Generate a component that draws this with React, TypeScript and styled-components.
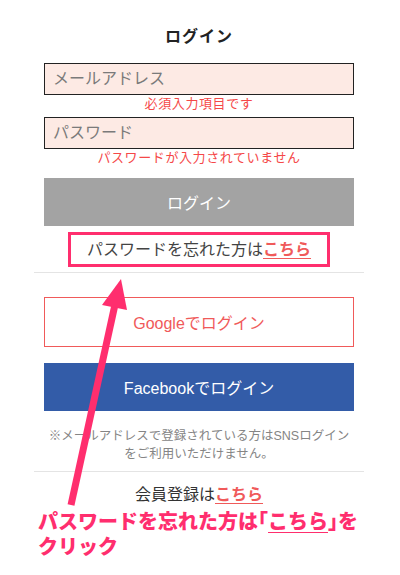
import React from "react";
import styled, { createGlobalStyle } from "styled-components";

const GlobalStyle = createGlobalStyle`
	html, body {
		margin: 0;
		padding: 0;
		background: #ffffff;
	}
	body {
		font-family: "Liberation Sans", "Noto Sans CJK JP", sans-serif;
		color: #333333;
	}
`;

const PINK = "#ff2e6e";
const LINK = "#f05a5a";

const Page = styled.div`
	position: relative;
	width: 400px;
	height: 575px;
	overflow: hidden;
`;

const Container = styled.main`
	width: 330px;
	margin-left: 34px;
	padding-top: 25px;
	display: flex;
	flex-direction: column;
`;

const Title = styled.h1`
	margin: 0;
	font-size: 16px;
	line-height: 24px;
	font-weight: 700;
	letter-spacing: 1px;
	text-align: center;
	color: #222222;
`;

const Form = styled.form`
	display: flex;
	flex-direction: column;
	padding: 0 10px;
	margin-top: 14px;
`;

const Input = styled.input`
	box-sizing: border-box;
	width: 100%;
	height: 32px;
	margin: 0;
	padding: 0 8px;
	border: 1px solid #222222;
	border-radius: 0;
	background: #fdeae4;
	font-family: "Liberation Sans", "Noto Sans CJK JP", sans-serif;
	font-size: 16px;
	outline: none;

	&::placeholder {
		color: #7a7a7a;
	}
`;

const ErrorText = styled.p<{ $gap: number }>`
	margin: 0 0 ${(p) => p.$gap}px;
	font-size: 13px;
	line-height: 18px;
	text-align: center;
	color: #f54848;
	letter-spacing: 0.6px;
`;

const Button = styled.button<{ $variant: "gray" | "google" | "facebook" }>`
	box-sizing: border-box;
	width: 100%;
	margin: 0;
	height: ${(p) => (p.$variant === "google" ? 50 : 48)}px;
	border: ${(p) => (p.$variant === "google" ? `1px solid ${LINK}` : "none")};
	border-radius: 0;
	background: ${(p) =>
		p.$variant === "gray" ? "#a3a3a3" : p.$variant === "google" ? "#ffffff" : "#335ca8"};
	color: ${(p) => (p.$variant === "google" ? LINK : "#ffffff")};
	font-family: "Liberation Sans", "Noto Sans CJK JP", sans-serif;
	font-size: 16px;
	cursor: pointer;
`;

const Row = styled.div<{ $top: number }>`
	display: flex;
	justify-content: center;
	margin-top: ${(p) => p.$top}px;
`;

const Highlight = styled.p`
	margin: 0;
	padding: 0 16px;
	border: 3px solid ${PINK};
	font-size: 16px;
	line-height: 29px;
	color: #444444;
`;

const Plain = styled.p`
	margin: 0;
	font-size: 16px;
	line-height: 24px;
	color: #333333;
`;

const Link = styled.a`
	color: ${LINK};
	font-weight: 700;
	text-decoration: underline;
	text-underline-offset: 3px;
`;

const Divider = styled.hr<{ $top: number }>`
	width: 100%;
	margin: ${(p) => p.$top}px 0 0;
	border: none;
	border-top: 1px solid #e4e4e4;
`;

const Social = styled.div`
	display: flex;
	flex-direction: column;
	gap: 16px;
	padding: 0 10px;
	margin-top: 24px;
`;

const Note = styled.p`
	margin: 16px 0 0;
	font-size: 12.5px;
	line-height: 18px;
	text-align: center;
	color: #858585;
`;

const Callout = styled.p`
	margin: 1px 0 0 4px;
	font-family: "Noto Sans CJK JP", sans-serif;
	font-size: 20px;
	line-height: 25px;
	font-weight: 900;
	color: ${PINK};
`;

const Bracket = styled.span`
	font-feature-settings: "halt";
`;

const CalloutLink = styled.span`
	text-decoration: underline;
	text-decoration-thickness: 1px;
	text-underline-offset: 3px;
`;

// annotation arrow pointing at the forgot-password link
const Arrow = styled.svg`
	position: absolute;
	left: 60px;
	top: 274px;
	pointer-events: none;
`;

export default function App() {
	return (
		<Page>
			<GlobalStyle />
			<Container>
				<Title>ログイン</Title>
				<Form onSubmit={(e) => e.preventDefault()}>
					<Input type="email" placeholder="メールアドレス" />
					<ErrorText $gap={4}>必須入力項目です</ErrorText>
					<Input type="password" placeholder="パスワード" />
					<ErrorText $gap={11}>パスワードが入力されていません</ErrorText>
					<Button $variant="gray" type="submit">
						ログイン
					</Button>
				</Form>
				<Row $top={6}>
					<Highlight>
						パスワードを忘れた方は<Link href="#">こちら</Link>
					</Highlight>
				</Row>
				<Divider $top={5} />
				<Social>
					<Button $variant="google" type="button">
						Googleでログイン
					</Button>
					<Button $variant="facebook" type="button">
						Facebookでログイン
					</Button>
				</Social>
				<Note>
					※メールアドレスで登録されている方はSNSログイン
					<br />
					をご利用いただけません。
				</Note>
				<Divider $top={8} />
				<Row $top={11}>
					<Plain>
						会員登録は<Link href="#">こちら</Link>
					</Plain>
				</Row>
				<Callout>
					パスワードを忘れた方は<Bracket>「</Bracket>
					<CalloutLink>こちら</CalloutLink>
					<Bracket>」</Bracket>を
					<br />
					クリック
				</Callout>
			</Container>
			<Arrow width="75" height="232" viewBox="60 274 75 232">
				<line x1="71" y1="505" x2="116" y2="300" stroke={PINK} strokeWidth="7" />
				<polygon points="121,279 102,305 127,310" fill={PINK} />
			</Arrow>
		</Page>
	);
}
